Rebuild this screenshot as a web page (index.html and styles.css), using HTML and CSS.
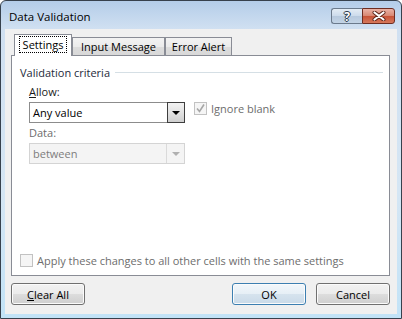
FILE: index.html
```html
<!DOCTYPE html>
<html lang="en">
<head>
    <meta charset="UTF-8">
    <meta name="viewport" content="width=device-width, initial-scale=1.0">
    <title>Data Validation</title>
    <link rel="stylesheet" href="styles.css">
</head>
<body>
<div class="window">
    <div class="titlebar">
        <span class="title">Data Validation</span>
        <div class="caption-btns">
            <span class="cap help">?</span>
            <span class="cap close">
                <svg width="16" height="10" viewBox="0 0 16 10">
                    <path d="M3.5 1.5 L12.5 8.5 M12.5 1.5 L3.5 8.5" stroke="#5a2418" stroke-width="4" stroke-linecap="round"/>
                    <path d="M3.5 1.5 L12.5 8.5 M12.5 1.5 L3.5 8.5" stroke="#fff" stroke-width="2.2" stroke-linecap="round"/>
                </svg>
            </span>
        </div>
    </div>

    <div class="client">
        <div class="tabs">
            <div class="tab active"><span class="focus">Settings</span></div>
            <div class="tab tab-msg">Input Message</div>
            <div class="tab tab-err">Error Alert</div>
        </div>

        <div class="panel">
            <div class="group-title">
                <span>Validation criteria</span>
                <span class="rule"></span>
            </div>

            <div class="criteria">
                <div class="fields">
                    <div class="field-label"><u>A</u>llow:</div>
                    <div class="combo">
                        <span class="combo-text">Any value</span>
                        <span class="drop"><span class="arrow"></span></span>
                    </div>
                    <div class="field-label dim">Data:</div>
                    <div class="combo disabled">
                        <span class="combo-text">between</span>
                        <span class="drop"><span class="arrow"></span></span>
                    </div>
                </div>
                <label class="check dim ignore">
                    <span class="box">
                        <svg width="11" height="11" viewBox="0 0 11 11">
                            <path d="M2 5.5 L4.5 8.5 L9 1.5" fill="none" stroke="#a6a6a6" stroke-width="1.6"/>
                        </svg>
                    </span>
                    Ignore blank
                </label>
            </div>

            <label class="check dim apply">
                <span class="box"></span>
                Apply these changes to all other cells with the same settings
            </label>
        </div>

        <div class="buttons">
            <button type="button" class="btn"><u>C</u>lear All</button>
            <span class="grow"></span>
            <button type="button" class="btn default">OK</button>
            <button type="button" class="btn">Cancel</button>
        </div>
    </div>
</div>
</body>
</html>
```

FILE: styles.css
```css
body {
    margin: 0;
    background: #fff;
    font-family: "Open Sans", "Noto Sans", sans-serif;
    font-size: 11px;
    color: #1a1a1a;
}

.window {
    width: 402px;
    height: 319px;
    box-sizing: border-box;
    border: 1px solid #37414d;
    border-radius: 6px 6px 0 0;
    background: linear-gradient(to bottom, #b4cde9 0, #d0e0f1 28px, #d5e6f4 60%, #c2e3f7 100%);
    display: flex;
    flex-direction: column;
}

/* title bar */
.titlebar {
    height: 28px;
    display: flex;
    align-items: center;
    justify-content: space-between;
    padding: 2px 6px 0 8px;
    box-sizing: border-box;
}
.title {
    font-size: 11.5px;
    color: #000;
}
.caption-btns {
    display: flex;
    height: 16px;
}
.cap {
    display: flex;
    align-items: center;
    justify-content: center;
    height: 16px;
    box-sizing: border-box;
}
.help {
    width: 31px;
    border: 1px solid #6b7a8c;
    border-right: none;
    border-radius: 3px 0 0 3px;
    background: linear-gradient(to bottom, #e4ecf5 0, #ccdbeb 50%, #b7c9dd 51%, #c3d4e6 100%);
    color: #fff;
    font-weight: bold;
    font-size: 12px;
    text-shadow: 0 0 1px #2c3a4c, 1px 0 0 #2c3a4c, -1px 0 0 #2c3a4c, 0 1px 0 #2c3a4c, 0 -1px 0 #2c3a4c;
}
.close {
    width: 33px;
    border: 1px solid #6e2d21;
    border-radius: 0 3px 3px 0;
    background: linear-gradient(to bottom, #eab2a5 0, #d88670 50%, #c75236 51%, #d6785b 100%);
}

/* client area */
.client {
    flex: 1;
    margin: 0 4px 4px 4px;
    background: #f0f0f0;
    display: flex;
    flex-direction: column;
    padding: 5px 7px 9px 6px;
}

.tabs {
    display: flex;
    align-items: flex-end;
    padding-left: 3px;
    height: 21px;
}
.tab {
    box-sizing: border-box;
    height: 18px;
    border: 1px solid #898c95;
    border-bottom: none;
    background: linear-gradient(to bottom, #f3f3f3 0, #ebebeb 50%, #dddddd 51%, #d8d8d8 100%);
    text-align: center;
    line-height: 16px;
    padding-top: 1px;
    color: #000;
}
.tab.active {
    width: 58px;
    height: 22px;
    margin-bottom: -1px;
    background: #fff;
    position: relative;
    z-index: 1;
    padding-top: 2px;
    line-height: 16px;
}
.focus {
    outline: 1px dotted #000;
    padding: 0 3px;
}
.tab-msg {
    width: 93px;
}
.tab-err {
    width: 67px;
}

.panel {
    height: 221px;
    box-sizing: border-box;
    border: 1px solid #898c95;
    background: #fff;
    padding: 8px 6px 7px 8px;
    display: flex;
    flex-direction: column;
}

.group-title {
    display: flex;
    align-items: center;
    height: 16px;
    color: #1e2a3a;
}
.rule {
    flex: 1;
    height: 1px;
    margin-left: 5px;
    background: #d5dfe5;
}

.criteria {
    display: flex;
    align-items: flex-start;
    margin-top: 4px;
    padding-left: 9px;
}
.fields {
    display: flex;
    flex-direction: column;
    width: 156px;
}
.field-label {
    height: 16px;
    line-height: 16px;
    margin-bottom: 2px;
}
.combo {
    display: flex;
    height: 21px;
    box-sizing: border-box;
    border: 1px solid #8c8c8c;
    background: #fff;
    margin-bottom: 2px;
}
.combo-text {
    flex: 1;
    line-height: 19px;
    padding-left: 3px;
    color: #000;
}
.drop {
    width: 18px;
    margin: -1px -1px -1px 0;
    box-sizing: border-box;
    border: 1px solid #3e3e3e;
    background: linear-gradient(to bottom, #f2f2f2 0, #e2e2e2 50%, #cfcfcf 100%);
    display: flex;
    align-items: center;
    justify-content: center;
}
.arrow {
    width: 0;
    height: 0;
    border-left: 4px solid transparent;
    border-right: 4px solid transparent;
    border-top: 4px solid #000;
    margin-top: 1px;
}
.combo.disabled {
    background: #f4f4f4;
    border-color: #d4d4d4;
}
.combo.disabled .combo-text {
    color: #7d7d7d;
}
.combo.disabled .drop {
    margin: 0;
    border: none;
    border-left: 1px solid #dadada;
    background: #f4f4f4;
}
.combo.disabled .arrow {
    border-top-color: #b0b0b0;
}

.dim {
    color: #6d6d6d;
}

.check {
    display: flex;
    align-items: center;
    height: 16px;
}
.box {
    width: 13px;
    height: 13px;
    box-sizing: border-box;
    border: 1px solid #c2c2c2;
    background: #f5f5f5;
    margin-right: 4px;
    display: flex;
    align-items: center;
    justify-content: center;
}
.ignore {
    margin-left: 9px;
    margin-top: 16px;
}
.apply {
    margin-top: auto;
}

/* buttons */
.buttons {
    display: flex;
    margin-top: 7px;
}
.grow {
    flex: 1;
}
.btn {
    width: 74px;
    height: 22px;
    font-family: inherit;
    font-size: 11px;
    color: #000;
    border: 1px solid #707070;
    border-radius: 3px;
    background: linear-gradient(to bottom, #f2f2f2 0, #ebebeb 50%, #dddddd 51%, #cfcfcf 100%);
    box-shadow: inset 0 0 0 1px #fbfbfb;
    padding: 0;
}
.btn.default {
    border-color: #3c7fb1;
    background: linear-gradient(to bottom, #f2f7fb 0, #e6eff6 50%, #d6e3ee 51%, #c9dae8 100%);
    margin-right: 10px;
}
```
